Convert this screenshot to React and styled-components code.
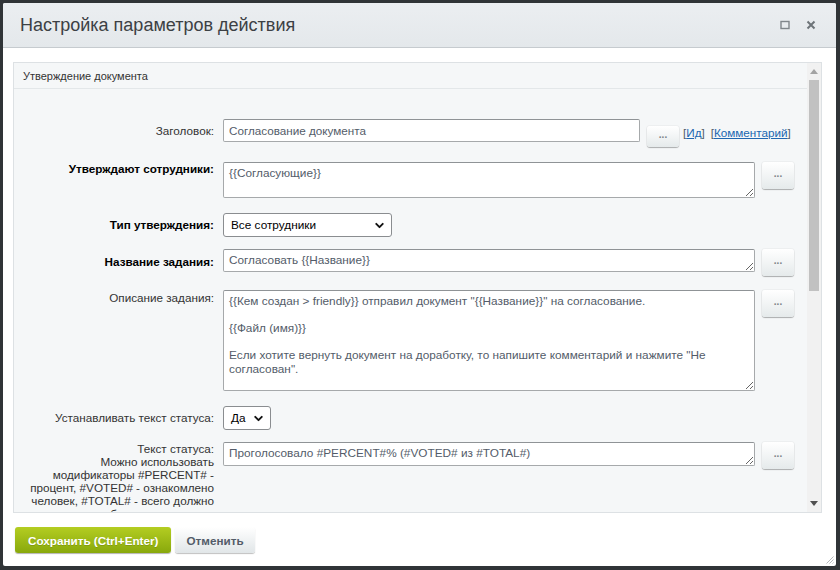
import React from 'react';
import styled, { createGlobalStyle } from 'styled-components';
import { ChevronDown } from 'lucide-react';

const GlobalStyle = createGlobalStyle`
  html, body { margin: 0; padding: 0; }
  body {
    background: #303437;
    font-family: "Liberation Sans", Arial, sans-serif;
  }
  * { box-sizing: border-box; }
`;

const Page = styled.div`
  width: 840px;
  height: 570px;
  padding: 3px 4px 4px 3px;
`;

const Dialog = styled.div`
  height: 100%;
  display: flex;
  flex-direction: column;
  background: #fff;
  border-radius: 2px;
  overflow: hidden;
`;

const TitleBar = styled.div`
  flex: 0 0 45px;
  display: flex;
  align-items: center;
  padding: 0 20px 0 17px;
  background: linear-gradient(#ebeef1, #e4e8eb);
  border-bottom: 1px solid #c6cbcf;
`;

const Title = styled.div`
  font-size: 18px;
  color: #3c4044;
`;

const TitleTools = styled.div`
  margin-left: auto;
  display: flex;
  align-items: center;
  gap: 16px;
`;

const Body = styled.div`
  flex: 1;
  min-height: 0;
  display: flex;
  padding: 14px 14px 0 10px;
`;

const Panel = styled.div`
  flex: 1;
  display: flex;
  border: 1px solid #dde1e4;
  background: #f5f7f8;
  overflow: hidden;
`;

const Scroller = styled.div`
  flex: 1;
  min-width: 0;
  overflow: hidden;
`;

const SectionHeader = styled.div`
  height: 26px;
  display: flex;
  align-items: center;
  padding-left: 9px;
  font-size: 11px;
  color: #333;
  border-bottom: 1px solid #e3e7e9;
`;

const Form = styled.div`
  padding-top: 30px;
`;

const Row = styled.div`
  display: grid;
  grid-template-columns: 200px 1fr;
  column-gap: 9px;
  align-items: start;
  margin-top: ${p => p.$gap || 0}px;
`;

const Label = styled.div`
  text-align: right;
  font-size: 11.7px;
  line-height: ${p => p.$lh || 14}px;
  padding: ${p => p.$pt || 0}px 0 0 12px;
  font-weight: ${p => (p.$bold ? 'bold' : 'normal')};
  color: ${p => (p.$bold ? '#000' : '#333')};
`;

const Controls = styled.div`
  display: flex;
  align-items: flex-start;
  gap: 7px;
`;

const TextInput = styled.input`
  width: 417px;
  height: 23px;
  padding: 0 5px;
  border: 1px solid #a6a9ab;
  border-top-color: #8f9396;
  border-radius: 2px;
  background: #fff;
  font: 11.7px "Liberation Sans", Arial, sans-serif;
  color: #535c69;
  outline: none;
`;

const TextArea = styled.textarea`
  width: 532px;
  height: ${p => p.$h}px;
  padding: 4px 5px;
  border: 1px solid #a6a9ab;
  border-top-color: #8f9396;
  border-radius: 2px;
  background: #fff;
  font: 11.8px/13.5px "Liberation Sans", Arial, sans-serif;
  color: #535c69;
  resize: both;
  overflow: hidden;
  outline: none;
`;

const Select = styled.div`
  width: ${p => p.$w}px;
  height: 24px;
  display: flex;
  align-items: center;
  justify-content: space-between;
  padding: 0 5px 0 7px;
  border: 1px solid #8a8d90;
  border-radius: 3px;
  background: #fff;
  font-size: 11.8px;
  color: #000;
`;

const DotsButton = styled.button`
  flex: 0 0 32px;
  height: ${p => p.$h || 27}px;
  margin-top: ${p => p.$mt || 0}px;
  padding: 0 0 4px;
  border: none;
  border-radius: 3px;
  background: linear-gradient(#ffffff, #e5eaeb);
  box-shadow: 0 1px 1px rgba(0, 0, 0, 0.28), 0 0 0 1px rgba(0, 0, 0, 0.03);
  color: #7c8286;
  font: bold 10px "Liberation Sans", Arial, sans-serif;
`;

const Links = styled.div`
  display: flex;
  gap: 6px;
  padding-top: 7px;
  margin-left: -3px;
  font-size: 11.7px;
  color: #535c69;
`;

const Link = styled.a`
  color: #2067b0;
  text-decoration: underline;
`;

const ScrollBar = styled.div`
  flex: 0 0 14px;
  display: flex;
  flex-direction: column;
  align-items: center;
  background: #f1f1f1;
`;

const ScrollArrow = styled.div`
  height: 17px;
  display: flex;
  align-items: center;
  justify-content: center;
`;

const Thumb = styled.div`
  width: 10px;
  height: 211px;
  background: #c1c1c1;
`;

const Track = styled.div`
  flex: 1;
`;

const Footer = styled.div`
  flex: 0 0 53px;
  display: flex;
  align-items: flex-start;
  gap: 4px;
  padding: 14px 2px 2px 12px;
`;

const FooterButton = styled.button`
  height: 26px;
  padding: 0 ${p => (p.$primary ? 13 : 11)}px;
  border: none;
  border-radius: 3px;
  font: bold 11.7px "Liberation Sans", Arial, sans-serif;
  color: ${p => (p.$primary ? '#fff' : '#535c69')};
  background: ${p =>
    p.$primary
      ? 'linear-gradient(#b4cd22, #88a80c)'
      : 'linear-gradient(#ffffff, #e1e6e8)'};
  box-shadow: ${p =>
    p.$primary
      ? '0 1px 1px rgba(0,0,0,0.3)'
      : '0 1px 1px rgba(0,0,0,0.25)'};
  text-shadow: ${p => (p.$primary ? '0 1px 0 rgba(0,0,0,0.15)' : 'none')};
`;

const Grip = styled.svg`
  margin-left: auto;
  align-self: flex-end;
`;

const Triangle = ({ up, color }) => (
  <svg width="8" height="5" viewBox="0 0 8 5">
    <path d={up ? 'M0 5 L4 0 L8 5 Z' : 'M0 0 L4 5 L8 0 Z'} fill={color} />
  </svg>
);

const Dots = ({ h, mt }) => (
  <DotsButton $h={h} $mt={mt}>...</DotsButton>
);

export default function App() {
  return (
    <Page>
      <GlobalStyle />
      <Dialog>
        <TitleBar>
          <Title>Настройка параметров действия</Title>
          <TitleTools>
            <svg width="10" height="10" viewBox="0 0 10 10">
              <rect x="1" y="1.5" width="8" height="7" fill="none" stroke="#80868b" strokeWidth="1.4" />
            </svg>
            <svg width="10" height="10" viewBox="0 0 10 10">
              <path d="M1.5 1.5 L8.5 8.5 M8.5 1.5 L1.5 8.5" stroke="#6e7479" strokeWidth="2" />
            </svg>
          </TitleTools>
        </TitleBar>

        <Body>
          <Panel>
            <Scroller>
              <SectionHeader>Утверждение документа</SectionHeader>
              <Form>
                <Row>
                  <Label $pt={5}>Заголовок:</Label>
                  <Controls>
                    <TextInput defaultValue="Согласование документа" />
                    <Dots h={21} mt={7} />
                    <Links>
                      <span>[<Link>Ид</Link>]</span>
                      <span>[<Link>Комментарий</Link>]</span>
                    </Links>
                  </Controls>
                </Row>

                <Row $gap={15}>
                  <Label $bold $pt={0}>Утверждают сотрудники:</Label>
                  <Controls>
                    <TextArea $h={36} defaultValue="{{Согласующие}}" />
                    <Dots />
                  </Controls>
                </Row>

                <Row $gap={15}>
                  <Label $bold $pt={5}>Тип утверждения:</Label>
                  <Controls>
                    <Select $w={169}>
                      <span>Все сотрудники</span>
                      <ChevronDown size={13} strokeWidth={3.5} color="#111" />
                    </Select>
                  </Controls>
                </Row>

                <Row $gap={12}>
                  <Label $bold $pt={6}>Название задания:</Label>
                  <Controls>
                    <TextArea $h={23} defaultValue="Согласовать {{Название}}" />
                    <Dots />
                  </Controls>
                </Row>

                <Row $gap={14}>
                  <Label $pt={1}>Описание задания:</Label>
                  <Controls>
                    <TextArea
                      $h={101}
                      defaultValue={
                        '{{Кем создан > friendly}} отправил документ "{{Название}}" на согласование.\n\n{{Файл (имя)}}\n\nЕсли хотите вернуть документ на доработку, то напишите комментарий и нажмите "Не согласован".'
                      }
                    />
                    <Dots />
                  </Controls>
                </Row>

                <Row $gap={15}>
                  <Label $pt={5}>Устанавливать текст статуса:</Label>
                  <Controls>
                    <Select $w={48}>
                      <span>Да</span>
                      <ChevronDown size={13} strokeWidth={3.5} color="#111" />
                    </Select>
                  </Controls>
                </Row>

                <Row $gap={12}>
                  <Label $lh={13} $pt={0}>
                    Текст статуса:
                    <br />
                    Можно использовать модификаторы #PERCENT# - процент, #VOTED# - ознакомлено человек, #TOTAL# - всего должно быть ознакомлено.
                  </Label>
                  <Controls>
                    <TextArea $h={24} defaultValue="Проголосовало #PERCENT#% (#VOTED# из #TOTAL#)" />
                    <Dots />
                  </Controls>
                </Row>
              </Form>
            </Scroller>
            <ScrollBar>
              <ScrollArrow>
                <Triangle up color="#a3a3a3" />
              </ScrollArrow>
              <Thumb />
              <Track />
              <ScrollArrow>
                <Triangle color="#505050" />
              </ScrollArrow>
            </ScrollBar>
          </Panel>
        </Body>

        <Footer>
          <FooterButton $primary>Сохранить (Ctrl+Enter)</FooterButton>
          <FooterButton>Отменить</FooterButton>
          <Grip width="9" height="9" viewBox="0 0 9 9">
            <path d="M8.5 1.5 L1.5 8.5 M8.5 4.5 L4.5 8.5 M8.5 7.5 L7.5 8.5" stroke="#b5b9bc" strokeWidth="1" />
          </Grip>
        </Footer>
      </Dialog>
    </Page>
  );
}
